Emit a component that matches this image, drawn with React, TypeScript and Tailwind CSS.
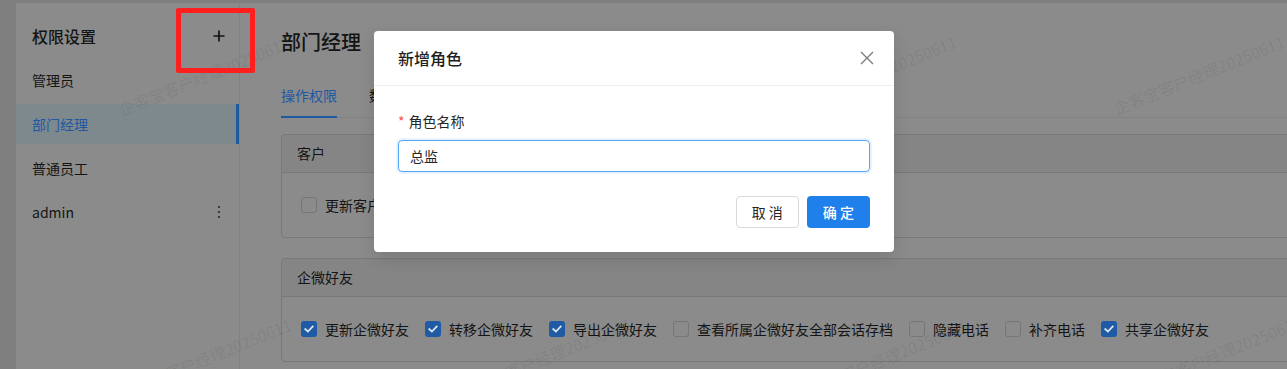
import React from "react";

const FONT = "font-['Noto_Sans_CJK_SC','Noto_Sans',sans-serif]";

function Box({ checked }: { checked: boolean }) {
  if (checked) {
    return (
      <span className="w-4 h-4 rounded-[3px] bg-[#1f5ba4] flex items-center justify-center shrink-0">
        <svg width="10" height="8" viewBox="0 0 10 8">
          <path d="M1.3 4.1 L3.9 6.5 L8.7 1.5" stroke="#dbe3ee" strokeWidth="1.8" fill="none" strokeLinecap="square" />
        </svg>
      </span>
    );
  }
  return <span className="w-4 h-4 rounded-[3px] border border-[#767676] bg-[#8b8b8b] shrink-0" />;
}

function Item({ checked, label }: { checked: boolean; label: string }) {
  return (
    <div className="flex items-center gap-2 mr-4">
      <Box checked={checked} />
      <span className="text-[14px] leading-[22px] text-[#141414] whitespace-nowrap">{label}</span>
    </div>
  );
}

const WATERMARKS = [
  "left-[119px] top-[100px]",
  "left-[454px] top-[100px]",
  "left-[786px] top-[99px]",
  "left-[1114px] top-[99px]",
  "left-[121px] top-[382px]",
  "left-[461px] top-[381px]",
  "left-[796px] top-[384px]",
  "left-[1131px] top-[379px]",
];

export default function App() {
  const menu = ["管理员", "部门经理", "普通员工", "admin"];
  return (
    <div className={`relative w-[1287px] h-[369px] overflow-hidden bg-[#7f7f7f] pl-4 pt-[3px] ${FONT}`}>
      <div className="flex h-full bg-[#8b8b8b]">
        {/* Sidebar */}
        <div className="w-[224px] shrink-0 border-r border-[#828282] flex flex-col">
          <div className="flex items-center justify-between pl-4 pr-[14px] pt-[21px]">
            <span className="text-[16px] leading-6 font-medium text-[#141414]">权限设置</span>
            <svg width="12" height="12" viewBox="0 0 12 12">
              <path d="M6 0.5 V11.5 M0.5 6 H11.5" stroke="#141414" strokeWidth="1.7" />
            </svg>
          </div>
          <div className="mt-3 flex flex-col gap-1">
            {menu.map((m) => {
              const sel = m === "部门经理";
              return (
                <div
                  key={m}
                  className={
                    sel
                      ? "relative h-10 flex items-center justify-between pl-4 pr-[14px] bg-[#7e898e]"
                      : "relative h-10 flex items-center justify-between pl-4 pr-[14px]"
                  }
                >
                  <span className={sel ? "text-[14px] text-[#1f58a2]" : "text-[14px] text-[#141414]"}>{m}</span>
                  {m === "admin" && (
                    <svg width="12" height="14" viewBox="0 0 12 14">
                      <circle cx="6" cy="2" r="1.1" fill="#2a2a2a" />
                      <circle cx="6" cy="7" r="1.1" fill="#2a2a2a" />
                      <circle cx="6" cy="12" r="1.1" fill="#2a2a2a" />
                    </svg>
                  )}
                  {sel && <span className="absolute right-0 top-0 bottom-0 w-[3px] bg-[#1d5aa0]" />}
                </div>
              );
            })}
          </div>
        </div>

        {/* Main */}
        <div className="flex-1 pl-[41px] pt-[25px]">
          <div className="w-[1100px]">
            <div className="text-[20px] leading-7 font-medium text-[#141414]">部门经理</div>
            <div className="mt-4 flex gap-8 border-b border-[#838383]">
              <div className="relative pt-3 pb-[11px] text-[14px] leading-[22px] text-[#1f58a2]">
                操作权限
                <span className="absolute left-0 right-0 bottom-[-1px] h-[2px] bg-[#1d5aa0]" />
              </div>
              <div className="pt-3 pb-[11px] text-[14px] leading-[22px] text-[#141414]">数据权限</div>
            </div>

            <div className="mt-4 border border-[#787878] rounded-[4px] overflow-hidden">
              <div className="h-[38px] bg-[#858585] border-b border-[#787878] px-[15px] flex items-center text-[14px] text-[#141414]">
                客户
              </div>
              <div className="h-16 flex items-center pl-[19px]">
                <Item checked={false} label="更新客户信息" />
                <Item checked={true} label="转移客户" />
                <Item checked={true} label="导出客户" />
              </div>
            </div>

            <div className="mt-5 border border-[#787878] rounded-[4px] overflow-hidden">
              <div className="h-[38px] bg-[#858585] border-b border-[#787878] px-[15px] flex items-center text-[14px] text-[#141414]">
                企微好友
              </div>
              <div className="h-16 flex items-center pl-[19px]">
                <Item checked={true} label="更新企微好友" />
                <Item checked={true} label="转移企微好友" />
                <Item checked={true} label="导出企微好友" />
                <Item checked={false} label="查看所属企微好友全部会话存档" />
                <Item checked={false} label="隐藏电话" />
                <Item checked={false} label="补齐电话" />
                <Item checked={true} label="共享企微好友" />
              </div>
            </div>
          </div>
        </div>
      </div>

      {/* Watermarks */}
      {WATERMARKS.map((p, i) => (
        <span
          key={i}
          className={`absolute ${p} origin-left -rotate-[22deg] whitespace-nowrap text-[16px] leading-5 text-black/[0.07] pointer-events-none`}
        >
          企客宝客户经理20250611
        </span>
      ))}

      {/* Annotation */}
      <div className="absolute left-[176px] top-[8px] w-[79px] h-[65px] border-[5px] border-[#ff1f1f] rounded-[2px]" />

      {/* Modal */}
      <div className="absolute left-[374px] top-[31px] w-[520px] bg-white rounded-[4px] shadow-[0_6px_16px_rgba(0,0,0,0.12)]">
        <div className="flex items-center justify-between px-6 py-4 border-b border-[#eeeeee]">
          <span className="text-[16px] leading-[22px] font-medium text-[#1f1f1f]">新增角色</span>
          <svg width="14" height="14" viewBox="0 0 14 14" className="mr-[-4px]">
            <path d="M1 1 L13 13 M13 1 L1 13" stroke="#7a7a7a" strokeWidth="1.3" />
          </svg>
        </div>
        <div className="px-6 pt-6 pb-6">
          <div className="flex items-center text-[14px] leading-[22px] text-[#262626]">
            <span className="text-[#ff4d4f] mr-1 text-[14px]">*</span>
            角色名称
          </div>
          <div className="mt-2 h-8 rounded-[4px] border border-[#55a6f2] shadow-[0_0_0_2px_rgba(24,144,255,0.1)] flex items-center px-[11px] text-[14px] text-[#262626]">
            总监
          </div>
          <div className="mt-6 flex justify-end gap-2">
            <div className="h-8 px-[15px] rounded-[4px] border border-[#d9d9d9] flex items-center text-[14px] text-[#262626] whitespace-pre">
              取 消
            </div>
            <div className="h-8 px-[16px] rounded-[4px] bg-[#1f80ec] flex items-center text-[14px] font-medium text-white whitespace-pre">
              确 定
            </div>
          </div>
        </div>
      </div>
    </div>
  );
}
